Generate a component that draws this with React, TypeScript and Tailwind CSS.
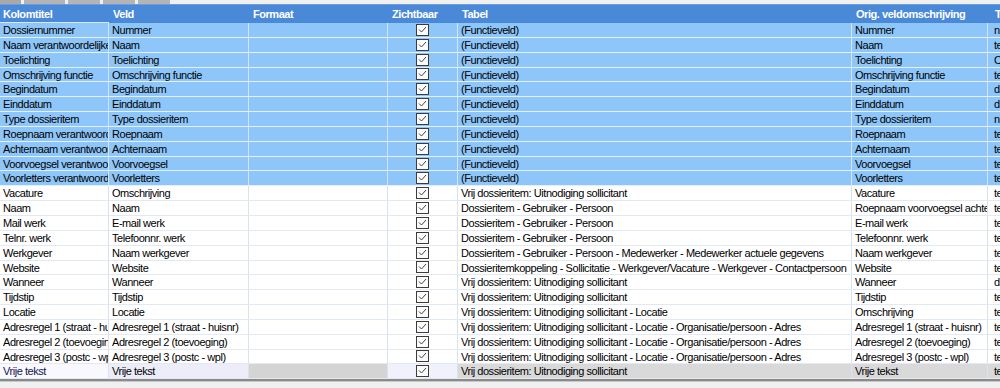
import React from "react";

type Row = {
  titel: string;
  veld: string;
  tabel: string;
  orig: string;
  type: string;
  blue?: boolean;
  last?: boolean;
};

const fn = "(Functieveld)";
const uit = "Vrij dossieritem: Uitnodiging sollicitant";
const geb = "Dossieritem - Gebruiker - Persoon";
const adres = "Vrij dossieritem: Uitnodiging sollicitant - Locatie - Organisatie/persoon - Adres";

const rows: Row[] = [
  { titel: "Dossiernummer", veld: "Nummer", tabel: fn, orig: "Nummer", type: "nummer", blue: true },
  { titel: "Naam verantwoordelijke", veld: "Naam", tabel: fn, orig: "Naam", type: "tekst", blue: true },
  { titel: "Toelichting", veld: "Toelichting", tabel: fn, orig: "Toelichting", type: "Commentaar", blue: true },
  { titel: "Omschrijving functie", veld: "Omschrijving functie", tabel: fn, orig: "Omschrijving functie", type: "tekst", blue: true },
  { titel: "Begindatum", veld: "Begindatum", tabel: fn, orig: "Begindatum", type: "datum", blue: true },
  { titel: "Einddatum", veld: "Einddatum", tabel: fn, orig: "Einddatum", type: "datum", blue: true },
  { titel: "Type dossieritem", veld: "Type dossieritem", tabel: fn, orig: "Type dossieritem", type: "nummer", blue: true },
  { titel: "Roepnaam verantwoordelijke", veld: "Roepnaam", tabel: fn, orig: "Roepnaam", type: "tekst", blue: true },
  { titel: "Achternaam verantwoordelijke", veld: "Achternaam", tabel: fn, orig: "Achternaam", type: "tekst", blue: true },
  { titel: "Voorvoegsel verantwoordelijke", veld: "Voorvoegsel", tabel: fn, orig: "Voorvoegsel", type: "tekst", blue: true },
  { titel: "Voorletters verantwoordelijke", veld: "Voorletters", tabel: fn, orig: "Voorletters", type: "tekst", blue: true },
  { titel: "Vacature", veld: "Omschrijving", tabel: uit, orig: "Vacature", type: "tekst" },
  { titel: "Naam", veld: "Naam", tabel: geb, orig: "Roepnaam voorvoegsel achternaam", type: "tekst" },
  { titel: "Mail werk", veld: "E-mail werk", tabel: geb, orig: "E-mail werk", type: "tekst" },
  { titel: "Telnr. werk", veld: "Telefoonnr. werk", tabel: geb, orig: "Telefoonnr. werk", type: "tekst" },
  { titel: "Werkgever", veld: "Naam werkgever", tabel: "Dossieritem - Gebruiker - Persoon - Medewerker - Medewerker actuele gegevens", orig: "Naam werkgever", type: "tekst" },
  { titel: "Website", veld: "Website", tabel: "Dossieritemkoppeling - Sollicitatie - Werkgever/Vacature - Werkgever - Contactpersoon", orig: "Website", type: "tekst" },
  { titel: "Wanneer", veld: "Wanneer", tabel: uit, orig: "Wanneer", type: "datum" },
  { titel: "Tijdstip", veld: "Tijdstip", tabel: uit, orig: "Tijdstip", type: "tekst" },
  { titel: "Locatie", veld: "Locatie", tabel: uit + " - Locatie", orig: "Omschrijving", type: "tekst" },
  { titel: "Adresregel 1 (straat - huisnr)", veld: "Adresregel 1 (straat - huisnr)", tabel: adres, orig: "Adresregel 1 (straat - huisnr)", type: "tekst" },
  { titel: "Adresregel 2 (toevoeging)", veld: "Adresregel 2 (toevoeging)", tabel: adres, orig: "Adresregel 2 (toevoeging)", type: "tekst" },
  { titel: "Adresregel 3 (postc - wpl)", veld: "Adresregel 3 (postc - wpl)", tabel: adres, orig: "Adresregel 3 (postc - wpl)", type: "tekst" },
  { titel: "Vrije tekst", veld: "Vrije tekst", tabel: uit, orig: "Vrije tekst", type: "tekst", last: true },
];

const font = { fontFamily: '"Liberation Sans", Arial, sans-serif' };

const Check = () => (
  <svg width="13" height="12" viewBox="0 0 13 12">
    <rect x="0.5" y="0.5" width="12" height="11" fill="#fbfbfb" stroke="#3c3c3c" />
    <path d="M3 5.5 L5.5 8 L10 3" fill="none" stroke="#454545" strokeWidth="1" />
  </svg>
);

const Cell = ({
  w,
  line,
  bg = "",
  text = "",
  children,
}: {
  w: string;
  line: string;
  bg?: string;
  text?: string;
  children?: React.ReactNode;
}) => (
  <div className={`${w} ${line} ${bg} ${text} shrink-0 h-full border-r overflow-hidden whitespace-nowrap pl-[3px] pt-px leading-[13.85px]`}>
    {children}
  </div>
);

const GridRow = ({ r }: { r: Row }) => {
  const line = r.blue ? "border-[#d2e6fb]" : "border-[#d8e2f1]";
  const rowBg = r.blue ? "bg-[#8ec6fa]" : "bg-white";
  const hLine = r.blue ? "border-[#e4f0fd]" : "border-[#e3e9f3]";
  if (r.last) {
    return (
      <div className={`flex h-[14.85px] border-b ${hLine} text-black`}>
        <Cell w="w-[109px]" line={line} bg="bg-[#f8f8fd]" text="text-[#141450]">{r.titel}</Cell>
        <Cell w="w-[140px]" line={line} bg="bg-[#ededfa]">{r.veld}</Cell>
        <Cell w="w-[139px]" line={line} bg="bg-[#d4d4d4]" />
        <div className={`w-[70px] ${line} border-r shrink-0 h-full flex items-center justify-center bg-[#f1f1fc]`}>
          <Check />
        </div>
        <Cell w="w-[394px]" line={line} bg="bg-[#d9d9d9]">{r.tabel}</Cell>
        <Cell w="w-[136px]" line={line} bg="bg-[#d9d9d9]">{r.orig}</Cell>
        <div className="flex-1 h-full bg-[#d9d9d9] pl-[6px] pt-px leading-[13.85px] overflow-hidden whitespace-nowrap">{r.type}</div>
      </div>
    );
  }
  return (
    <div className={`flex h-[14.85px] border-b ${hLine} ${rowBg} text-black`}>
      <Cell w="w-[109px]" line={line}>{r.titel}</Cell>
      <Cell w="w-[140px]" line={line}>{r.veld}</Cell>
      <Cell w="w-[139px]" line={line} />
      <div className={`w-[70px] ${line} border-r shrink-0 h-full flex items-center justify-center`}>
        <Check />
      </div>
      <Cell w="w-[394px]" line={line}>{r.tabel}</Cell>
      <Cell w="w-[136px]" line={line}>{r.orig}</Cell>
      <div className="flex-1 h-full pl-[6px] pt-px leading-[13.85px] overflow-hidden whitespace-nowrap">{r.type}</div>
    </div>
  );
};

export default function App() {
  return (
    <div className="w-[1000px] h-[388px] overflow-hidden bg-[#f0f0f0] text-[11px] tracking-[-0.45px]" style={font}>
      {/* knoppenbalk, bijna helemaal weggeschoven */}
      <div className="flex h-[4px] gap-[3px] bg-[#f0f0f0]">
        <div className="w-[21px] bg-[#a9a9a9]" />
        <div className="w-[41px] bg-[#b4b4b4]" />
        <div className="w-[32px] bg-[#b4b4b4]" />
        <div className="w-[32px] bg-[#b4b4b4]" />
        <div className="w-[32px] bg-[#b4b4b4]" />
      </div>

      {/* kolomkoppen */}
      <div className="flex h-[19px] bg-[#4a88d8] text-white font-bold leading-[18px] border-t border-[#6a9de0]">
        <div className="w-[109px] shrink-0 pl-[3px] border-b border-[#d8e8fa]">Kolomtitel</div>
        <div className="w-[140px] shrink-0 pl-[4px]">Veld</div>
        <div className="w-[139px] shrink-0 pl-[4px]">Formaat</div>
        <div className="w-[70px] shrink-0 pl-[4px]">Zichtbaar</div>
        <div className="w-[394px] shrink-0 pl-[4px]">Tabel</div>
        <div className="w-[136px] shrink-0 pl-[4px]">Orig. veldomschrijving</div>
        <div className="flex-1 pl-[7px] overflow-hidden whitespace-nowrap">Type</div>
      </div>

      {/* rijen */}
      <div className="flex flex-col">
        {rows.map((r, i) => (
          <GridRow key={i} r={r} />
        ))}
      </div>

      <div className="h-[2px] bg-[#8a8a8a]" />
      <div className="h-px bg-[#c8c8c8]" />
    </div>
  );
}
